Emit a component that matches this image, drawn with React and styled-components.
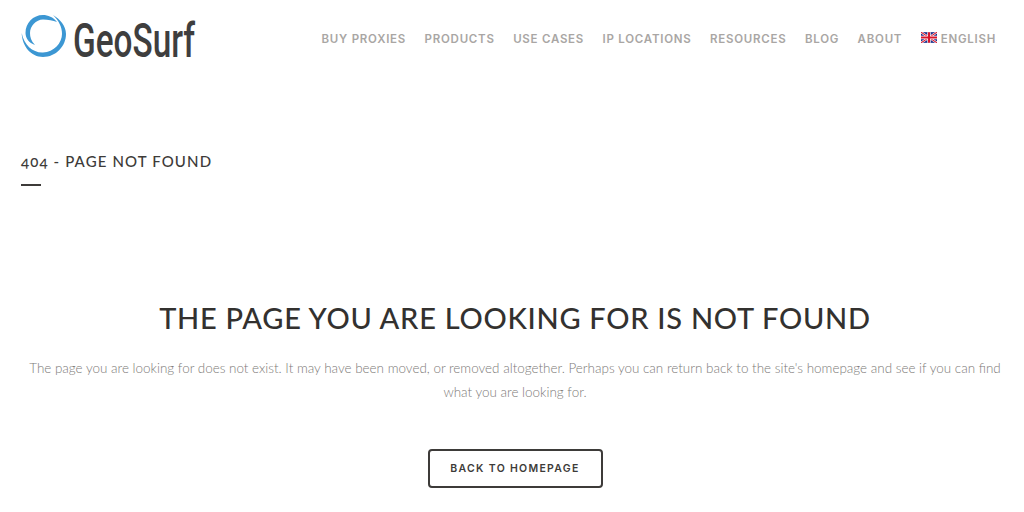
import React from "react";
import styled, { createGlobalStyle } from "styled-components";

const GlobalStyle = createGlobalStyle`
  html, body {
    margin: 0;
    padding: 0;
    background: #fff;
  }
  body {
    font-family: "Inter", "Liberation Sans", sans-serif;
  }
`;

const Page = styled.div`
  width: 1024px;
  height: 512px;
  overflow: hidden;
  display: flex;
  flex-direction: column;
`;

const Header = styled.header`
  height: 76px;
  padding: 0 28px 0 21px;
  display: flex;
  align-items: flex-start;
  justify-content: space-between;
`;

const LogoLink = styled.a`
  display: block;
  margin-top: 13px;
  height: 50px;
`;

const Nav = styled.nav`
  display: flex;
  align-items: center;
  gap: 18.5px;
  height: 77px;
`;

const NavItem = styled.a`
  display: flex;
  align-items: center;
  gap: 4px;
  font-family: "Inter", sans-serif;
  font-size: 11.5px;
  font-weight: 600;
  letter-spacing: 0.75px;
  color: #a9a6a4;
  white-space: nowrap;
`;

const FlagIcon = styled.svg`
  width: 16px;
  height: 11px;
  margin-top: -3px;
`;

const TitleBlock = styled.div`
  padding: 76px 21px 0;
`;

const PageTitle = styled.h1`
  margin: 0;
  font-family: "Lato", sans-serif;
  font-size: 15px;
  line-height: 18px;
  font-weight: 500;
  letter-spacing: 1.12px;
  font-variant-numeric: oldstyle-nums;
  color: #3d3b39;
`;

const TitleRule = styled.div`
  width: 20px;
  height: 2px;
  margin-top: 14px;
  background: #3d3b39;
`;

const Content = styled.main`
  padding: 114px 21px 0 27px;
  display: flex;
  flex-direction: column;
  align-items: center;
`;

const Heading = styled.h2`
  margin: 0;
  font-family: "Lato", sans-serif;
  font-size: 29px;
  line-height: 36px;
  font-weight: 500;
  letter-spacing: 0.73px;
  color: #33312f;
  white-space: nowrap;
`;

const Message = styled.p`
  margin: 20px 0 0;
  font-family: "Lato", sans-serif;
  font-size: 13.45px;
  line-height: 24px;
  font-weight: 300;
  color: #7d7a78;
  text-align: center;
`;

const BackButton = styled.a`
  margin-top: 45px;
  box-sizing: border-box;
  width: 175px;
  height: 39px;
  display: flex;
  align-items: center;
  justify-content: center;
  border: 2px solid #3d3b39;
  border-radius: 4px;
  font-family: "Inter", sans-serif;
  font-size: 10.5px;
  font-weight: 600;
  letter-spacing: 1.3px;
  color: #3d3b39;
`;

function Logo() {
  return (
    <svg width="240" height="50" viewBox="0 0 240 50">
      <path d="M0.7 20 C1 33 10 44 22 44 C35 44 45 33 45 21 C45 13 39 6 32 2 C38 8 41 14 41 21 C41 30 33 39 22 39.5 C12 40 3 32 0.7 20 Z" fill="#3c97d3" />
      <path d="M36 9 C32 4 27 2 22 2 C12 2 4.5 10 4.5 20 C4.5 25 8 30 14 32 C10 28 9 24 9 20 C9 13 15 6.5 22 6.5 C27 6.5 32 7.5 36 9 Z" fill="#3c97d3" />
      <text x="52" y="44" textLength="122" lengthAdjust="spacingAndGlyphs" fontFamily="Roboto, sans-serif" fontWeight="500" fontSize="48" fill="#3e3e3e">GeoSurf</text>
    </svg>
  );
}

function UkFlag() {
  return (
    <FlagIcon viewBox="0 0 60 40">
      <rect width="60" height="40" fill="#1a2f8a" />
      <path d="M0 0 L60 40 M60 0 L0 40" stroke="#fff" strokeWidth="8" />
      <path d="M0 0 L60 40 M60 0 L0 40" stroke="#d8152a" strokeWidth="4" />
      <path d="M30 0 V40 M0 20 H60" stroke="#fff" strokeWidth="13" />
      <path d="M30 0 V40 M0 20 H60" stroke="#d8152a" strokeWidth="8" />
    </FlagIcon>
  );
}

const navLinks = ["BUY PROXIES", "PRODUCTS", "USE CASES", "IP LOCATIONS", "RESOURCES", "BLOG", "ABOUT"];

export default function App() {
  return (
    <Page>
      <GlobalStyle />
      <Header>
        <LogoLink><Logo /></LogoLink>
        <Nav>
          {navLinks.map((link) => (
            <NavItem key={link}>{link}</NavItem>
          ))}
          <NavItem><UkFlag />ENGLISH</NavItem>
        </Nav>
      </Header>
      <TitleBlock>
        <PageTitle>404 - PAGE NOT FOUND</PageTitle>
        <TitleRule />
      </TitleBlock>
      <Content>
        <Heading>THE PAGE YOU ARE LOOKING FOR IS NOT FOUND</Heading>
        <Message>
          The page you are looking for does not exist. It may have been moved, or removed altogether. Perhaps you can return back to the site's homepage and see if you can find what you are looking for.
        </Message>
        <BackButton>BACK TO HOMEPAGE</BackButton>
      </Content>
    </Page>
  );
}
